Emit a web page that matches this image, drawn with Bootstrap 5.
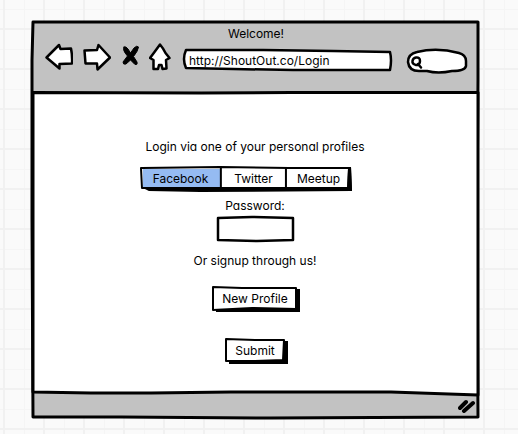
<!DOCTYPE html>
<html lang="en">
<head>
<meta charset="utf-8">
<meta name="viewport" content="width=device-width, initial-scale=1">
<title>Welcome!</title>
<link href="https://cdn.jsdelivr.net/npm/bootstrap@5.3.0/dist/css/bootstrap.min.css" rel="stylesheet">
<style>
body {
  font: 12px/16px Inter, "Liberation Sans", sans-serif;
  font-feature-settings: "cv11";
  color: #000;
  background-color: #fafafa;
  background-image:
    linear-gradient(90deg, #f1f1f1 2px, transparent 2px),
    linear-gradient(#f1f1f1 2px, transparent 2px),
    linear-gradient(90deg, #f5f5f5 1px, transparent 1px),
    linear-gradient(#f5f5f5 1px, transparent 1px);
  background-size: 40px 40px;
  background-position: 3px 28px, 3px 28px, 24px 9px, 24px 9px;
}
.page { padding: 20px 39px 14px 31px; }
.sketch { isolation: isolate; }
.sketch > .ink { position: absolute; inset: 0; width: 100%; height: 100%; z-index: -1; overflow: visible; pointer-events: none; }
.ink path, .glyph path { vector-effect: non-scaling-stroke; stroke: #000; stroke-linecap: round; stroke-linejoin: round; }
.ink path { stroke-width: 2px; fill: none; }
.ink .shade { fill: #000; stroke: none; }
.ink .paper { fill: #fff; }
.ink .steel { fill: #c2c2c2; }
.ink .chosen { fill: #95bbf2; stroke: none; }
.heavy path { stroke-width: 3px; }
.bold path { stroke-width: 2.5px; }
.window-bar { height: 73px; padding: 6px 12px 0 14px; }
.toolbar { gap: 10px; margin-top: 1px; }
.tool { line-height: 0; }
.glyph { fill: #fff; stroke-width: 2.5px; }
.glyph .solid { fill: #000; stroke-width: 1px; }
.address { height: 22px; margin: 6px 0 0 2px; }
.search { width: 60px; height: 24px; margin: 6px 0 0 5px; }
.plain, .plain:focus { background: transparent; border: 0; color: inherit; font: inherit; font-feature-settings: inherit; width: 100%; height: 100%; }
.address .plain { padding: 0 6px; }
.search .plain { padding: 0 6px 0 16px; }
.content { padding-top: 46px; }
.btn { --bs-btn-font-size: 12px; --bs-btn-line-height: 16px; --bs-btn-color: #000; --bs-btn-border-width: 0; --bs-btn-hover-color: #000; --bs-btn-active-color: #000; }
.profiles { margin: 12px 18px 0 0; height: 25px; }
.profiles .btn { width: 66px; padding: 4px 4px 5px; }
.profiles .btn:first-of-type { width: 82px; }
.password-label { margin: 6px 0 3px; }
.password-box { width: 77px; height: 24px; }
.signup { margin-top: 12px; }
.new-profile, .submit { height: 25px; padding: 4px 0 5px; }
.new-profile { margin-top: 18px; width: 86px; }
.submit { margin-top: 27px; width: 61px; }
.status-bar { height: 25px; padding: 4px 3px; }
</style>
</head>
<body>
<div class="page min-vh-100 d-flex flex-column">
  <div class="sketch position-relative flex-grow-1 d-flex flex-column">
    <svg class="ink heavy" viewBox="0 0 448 400" preserveAspectRatio="none" aria-hidden="true">
      <path class="steel" d="M2 2H447V60L446 200L447 397L240 398L90 397L2 397L1 200L1 40Z"/>
      <path class="paper" d="M2 72.500L170 73L260 72.500L447 72.500V375L360 372L200 372L120 373L60 373L2 372Z"/>
    </svg>
    <header class="window-bar">
      <div class="text-center">Welcome!</div>
      <div class="toolbar d-flex align-items-start">
        <button class="tool btn p-0" type="button" aria-label="Back">
          <svg class="glyph" width="28" height="28" viewBox="0 0 28 28"><path d="M1.500 14.500L14 2L15.500 6L26 5.500Q27.500 13 27 20.500L14.500 21L14.500 25.500Z"/></svg>
        </button>
        <button class="tool btn p-0" type="button" aria-label="Forward">
          <svg class="glyph" width="28" height="28" viewBox="0 0 28 28"><path d="M27 14.500L15.500 2L14 7L1.500 7.500L2.500 20.500L14 20.500L14.500 26.500Z"/></svg>
        </button>
        <button class="tool btn p-0" type="button" aria-label="Stop">
          <svg class="glyph" width="18" height="28" viewBox="0 0 18 28"><path class="solid" d="M3 4Q5 3 7 6L9.500 10L13 5Q16 2 17.500 4Q17 8 12.500 13.500L16 19Q17 22 14 21.500L9.500 17L5 21Q2 22 2 19L6.500 13Q1 7 3 4Z"/></svg>
        </button>
        <button class="tool btn p-0" type="button" aria-label="Home">
          <svg class="glyph" width="22" height="28" viewBox="0 0 22 28"><path d="M11 1.500Q14 5 16.500 10L20.500 15L17 17L17.500 25.500L13.500 26L12.500 22L10 22L9 26L4.500 26L4.500 17L1 15L5.500 9Z"/></svg>
        </button>
        <div class="address sketch position-relative flex-grow-1">
          <svg class="ink bold" viewBox="0 0 209 22" preserveAspectRatio="none" aria-hidden="true"><path class="paper" d="M3 1L80 1L150 2L207 3Q209 11 207 21L110 21L50 20L3 19Q-1 10 3 1Z"/></svg>
          <input class="plain" type="text" aria-label="Address" value="http://ShoutOut.co/Login">
        </div>
        <div class="search sketch position-relative">
          <svg class="ink bold" viewBox="0 0 60 24" aria-hidden="true"><path class="paper" d="M10 3Q30-2 52 4Q59 6 59 12V17Q58 22 45 22Q31 25 20 22H12Q2 22 1 13Q1 5 10 3Z"/><path d="M9 8.500Q13 8 13 12Q13 16 9 16Q5 15 5.500 12Q6 9 9 8.500M11 15L14 18.500"/></svg>
          <input class="plain" type="text" aria-label="Search">
        </div>
      </div>
    </header>
    <main class="content flex-grow-1 d-flex flex-column align-items-center">
      <div>Login via one of your personal profiles</div>
      <div class="profiles sketch position-relative btn-group" role="group" aria-label="Personal profiles">
        <svg class="ink" viewBox="0 0 214 25" preserveAspectRatio="none" aria-hidden="true">
          <path class="shade" d="M0 20L8 24L60 25L214 24L213 1L209 1L208 20Z"/>
          <path class="paper" d="M1 1L80 0L150 1L211 1L210 21L1 21L0 1Z"/>
          <path class="chosen" d="M2 2H81V20H2Z"/>
          <path d="M81 1V21M147 1V22"/>
          <path class="shade" d="M210 0H213L214 24H209Z"/>
        </svg>
        <button class="btn rounded-0" type="button" aria-pressed="true">Facebook</button>
        <button class="btn rounded-0" type="button" aria-pressed="false">Twitter</button>
        <button class="btn rounded-0" type="button" aria-pressed="false">Meetup</button>
      </div>
      <label class="password-label" for="password">Password:</label>
      <div class="password-box sketch position-relative">
        <svg class="ink bold" viewBox="0 0 77 24" preserveAspectRatio="none" aria-hidden="true"><path class="paper" d="M1 1L35 0L76 1L76 23L40 24L1 23Z"/></svg>
        <input class="plain px-2" type="password" id="password">
      </div>
      <div class="signup">Or signup through us!</div>
      <button class="new-profile btn sketch position-relative" type="button">
        <svg class="ink" viewBox="0 0 86 25" preserveAspectRatio="none" aria-hidden="true"><path class="shade" d="M4 5L85 2H88V25H4Z"/><path class="paper" d="M1 0L30 1L84 1L84 22L40 21L1 23Z"/></svg>
        New Profile
      </button>
      <button class="submit btn sketch position-relative" type="submit">
        <svg class="ink" viewBox="0 0 61 25" preserveAspectRatio="none" aria-hidden="true"><path class="shade" d="M4 5L60 2H63V25H4Z"/><path class="paper" d="M1 0L30 1L59 1L58 21L30 22L1 22Z"/></svg>
        Submit
      </button>
    </main>
    <footer class="status-bar d-flex justify-content-end">
      <svg width="18" height="14" viewBox="0 0 18 14" aria-hidden="true"><path d="M2 9L8 3M6 12L15 4" fill="none" stroke="#000" stroke-width="4" stroke-linecap="round"/></svg>
    </footer>
  </div>
</div>
<script src="https://cdn.jsdelivr.net/npm/bootstrap@5.3.0/dist/js/bootstrap.bundle.min.js"></script>
</body>
</html>
